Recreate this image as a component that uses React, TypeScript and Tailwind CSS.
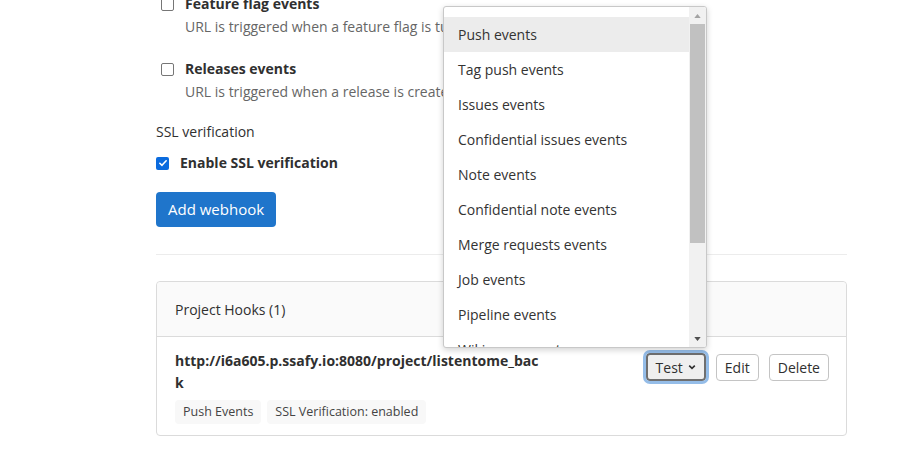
import React from "react";

const events = [
  "Push events",
  "Tag push events",
  "Issues events",
  "Confidential issues events",
  "Note events",
  "Confidential note events",
  "Merge requests events",
  "Job events",
  "Pipeline events",
  "Wiki page events",
];

function Box({ checked }: { checked?: boolean }) {
  if (checked) {
    return (
      <span className="flex h-[13px] w-[13px] items-center justify-center rounded-[2px] bg-[#0b6bde]">
        <svg viewBox="0 0 12 12" className="h-[10px] w-[10px]" fill="none">
          <path d="M2.2 6.3 4.8 8.8 9.8 3.4" stroke="white" strokeWidth="1.9" strokeLinecap="round" strokeLinejoin="round" />
        </svg>
      </span>
    );
  }
  return <span className="block h-[13px] w-[13px] rounded-[2px] border border-[#767676] bg-white" />;
}

function EventOption({ title, desc }: { title: string; desc: string }) {
  return (
    <div className="flex gap-[11px]">
      <div className="pt-[4px]">
        <Box />
      </div>
      <div>
        <div className="text-[14px] font-bold leading-[20px] text-[#303030]">{title}</div>
        <div className="mt-[3px] text-[14px] leading-[20px] text-[#666]">{desc}</div>
      </div>
    </div>
  );
}

export default function App() {
  return (
    <div className="relative h-[461px] w-[914px] overflow-hidden bg-white font-['Open_Sans',sans-serif] text-[#303030]">
      <div className="ml-[156px] w-[691px] -mt-[6px] flex flex-col">
        <div className="pl-[5px]">
          <EventOption title="Feature flag events" desc="URL is triggered when a feature flag is turned on or off" />
          <div className="mt-[22px]">
            <EventOption title="Releases events" desc="URL is triggered when a release is created/updated" />
          </div>
        </div>

        <div className="mt-[20px] text-[14px] leading-[20px]">SSL verification</div>
        <div className="mt-[11px] flex items-center gap-[11px]">
          <Box checked />
          <span className="text-[14px] font-bold leading-[20px]">Enable SSL verification</span>
        </div>
        <div className="mt-[19px]">
          <button className="h-[35px] rounded-[4px] bg-[#1f75cb] px-[12px] text-[15px] text-white">Add webhook</button>
        </div>

        <div className="mt-[27px] h-px bg-[#ececec]" />

        <div className="mt-[26px] rounded-[4px] border border-[#dbdbdb]">
          <div className="flex h-[55px] items-center rounded-t-[4px] border-b border-[#dbdbdb] bg-[#fafafa] px-[18px] text-[14px]">
            Project Hooks (1)
          </div>
          <div className="flex items-start justify-between px-[18px] pb-[11px] pt-[13px]">
            <div className="w-[372px]">
              <div className="break-all text-[14px] font-bold leading-[22px]">
                http://i6a605.p.ssafy.io:8080/project/listentome_back
              </div>
              <div className="mt-[6px] flex gap-[6px]">
                <span className="rounded-[4px] bg-[#f8f8f8] px-[8px] text-[12.5px] leading-[24px] text-[#444]">Push Events</span>
                <span className="rounded-[4px] bg-[#f8f8f8] px-[8px] text-[12.5px] leading-[24px] text-[#444]">SSL Verification: enabled</span>
              </div>
            </div>
            <div className="mr-[-1px] flex items-center gap-[10px] pt-[3px]">
              <button className="flex h-[28px] items-center gap-[5px] rounded-[4px] border-2 border-[#6f6f6f] bg-[#efefef] px-[8px] text-[14px] outline outline-[3px] outline-[#95bde8]">
                Test
                <svg viewBox="0 0 10 10" className="h-[8px] w-[8px]" fill="none">
                  <path d="M1.5 3.2 5 6.7 8.5 3.2" stroke="#303030" strokeWidth="2" />
                </svg>
              </button>
              <button className="h-[27px] rounded-[4px] border border-[#c4c4c4] bg-white px-[8px] text-[14px]">Edit</button>
              <button className="h-[27px] rounded-[4px] border border-[#c4c4c4] bg-white px-[8px] text-[14px]">Delete</button>
            </div>
          </div>
        </div>
      </div>

      <div className="absolute left-[443px] top-[6px] flex h-[342px] w-[264px] overflow-hidden rounded-[3px] border border-[#c8c8c8] bg-white shadow-[0_2px_6px_rgba(0,0,0,0.18)]">
        <div className="flex-1 overflow-hidden pt-[10px]">
          {events.map((e, i) => (
            <div
              key={e}
              className={`flex h-[35px] items-center pl-[14px] text-[14px] text-[#333] ${i === 0 ? "bg-[#ececec]" : ""}`}
            >
              {e}
            </div>
          ))}
        </div>
        <div className="flex w-[17px] flex-col bg-[#f1f1f1]">
          <div className="flex h-[17px] items-center justify-center">
            <svg viewBox="0 0 8 5" className="h-[4px] w-[7px]"><path d="M0 5 4 0 8 5z" fill="#a3a3a3" /></svg>
          </div>
          <div className="mx-[1px] h-[219px] bg-[#c1c1c1]" />
          <div className="flex-1" />
          <div className="flex h-[17px] items-center justify-center">
            <svg viewBox="0 0 8 5" className="h-[4px] w-[7px]"><path d="M0 0 4 5 8 0z" fill="#505050" /></svg>
          </div>
        </div>
      </div>
    </div>
  );
}
